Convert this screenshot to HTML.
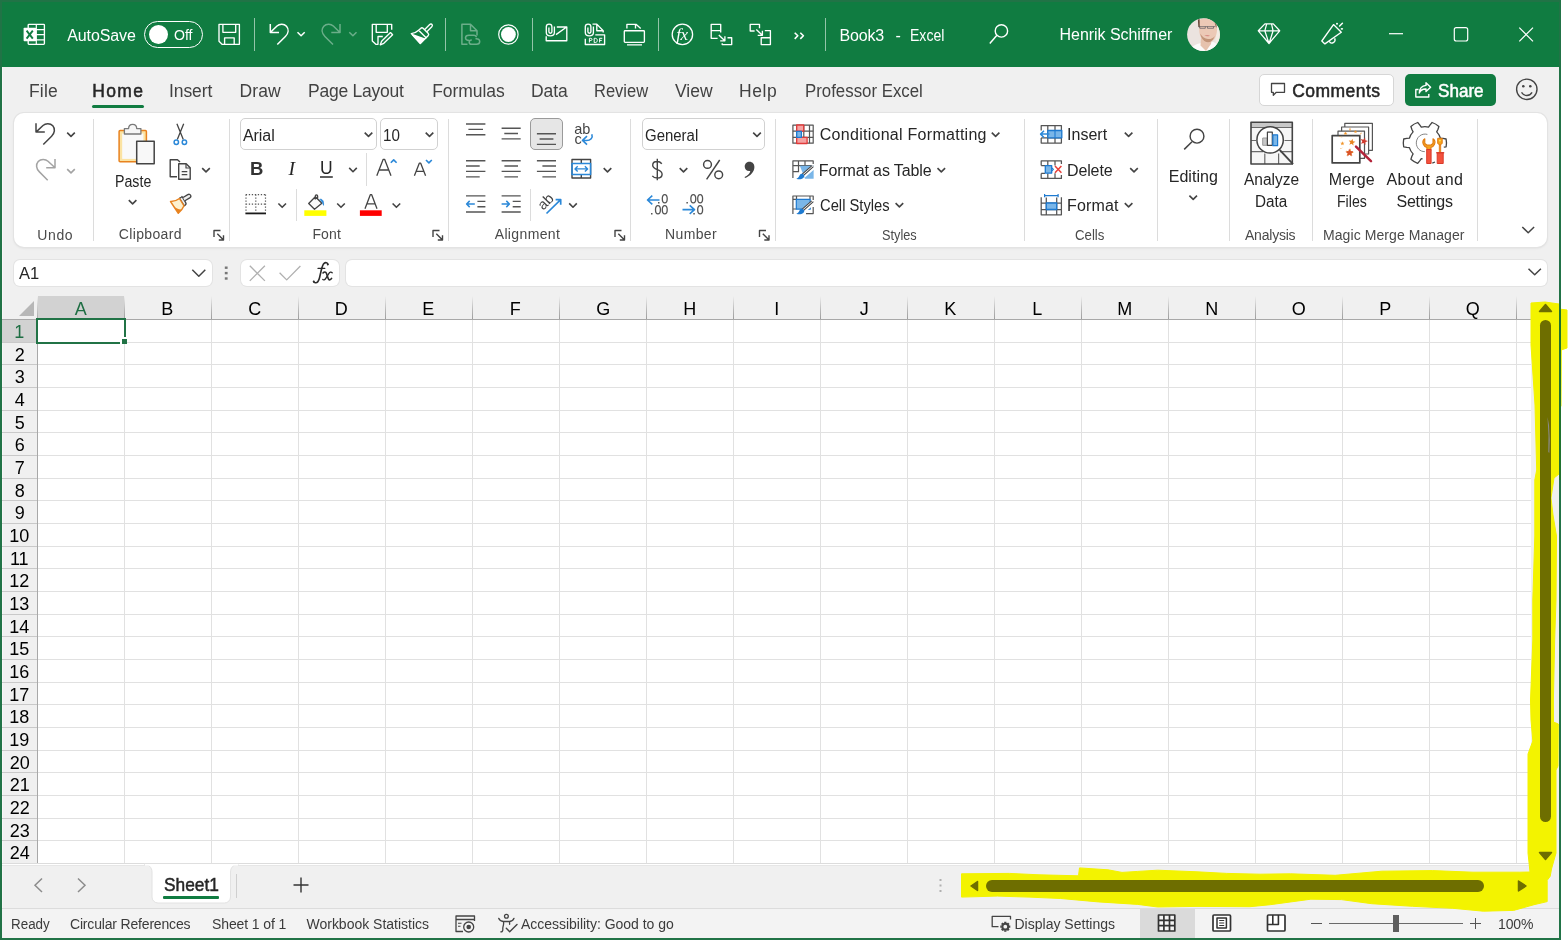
<!DOCTYPE html>
<html lang="en">
<head>
<meta charset="utf-8">
<title>Book3 - Excel</title>
<style>
*{box-sizing:border-box;margin:0;padding:0}
html,body{width:1568px;height:940px;overflow:hidden;background:#fff}
body{position:relative;font-family:"Liberation Sans",sans-serif;color:#242424}
.a{position:absolute}
.t{position:absolute;white-space:nowrap;line-height:1}
svg{position:absolute;overflow:visible}
#win{left:0;top:0;width:1561px;height:940px;background:#f0f0f0}
#title{left:0;top:0;width:1561px;height:67px;background:#107c41}
.bd{background:#217346}
.ts{background:rgba(255,255,255,.55);width:1px;top:18px;height:33px}
#ribbon{left:14px;top:113px;width:1533px;height:134px;background:#fff;border-radius:10px;box-shadow:0 0 0 1px #e3e3e3,0 1px 3px rgba(0,0,0,.10)}
.gs{background:#dcdcdc;width:1px;top:119px;height:122px}
.ms{background:#dcdcdc;width:1px}
.box{background:#fff;border:1px solid #d1d1d1;border-radius:5px}
.fb{background:#fff;border-radius:6px;box-shadow:0 0 0 1px #e3e3e3}
#grid{left:37px;top:320px;width:1494px;height:543px;background:#fff}
.ch{top:296px;height:23px}
.cl{top:296px;width:1px;height:23px;background:linear-gradient(#f0f0f0,#b9b9b9 60%,#9e9e9e)}
.rl{left:2px;width:35px;height:1px;background:#c9c9c9}
</style>
</head>
<body>
<div id="root" class="a" style="left:0;top:0;width:1568px;height:940px;will-change:transform">
<div id="win" class="a"></div>
<div id="title" class="a"></div>
<!-- window border -->
<div class="a bd" style="left:0;top:0;width:2px;height:940px"></div>
<div class="a bd" style="left:1559px;top:0;width:2px;height:940px"></div>
<div class="a bd" style="left:0;top:0;width:1561px;height:2px"></div>
<div class="a bd" style="left:0;top:938px;width:1561px;height:2px"></div>
<div class="a" style="left:2px;top:67px;width:1px;height:871px;background:#f8f6f6"></div>
<!-- title separators -->
<div class="a ts" style="left:254px"></div>
<div class="a ts" style="left:445px"></div>
<div class="a ts" style="left:532px"></div>
<div class="a ts" style="left:658px"></div>
<div class="a ts" style="left:825px"></div>
<!-- autosave toggle -->
<div class="a" style="left:144px;top:21px;width:59px;height:27px;border:1.3px solid #fff;border-radius:14px"></div>
<div class="a" style="left:149px;top:25px;width:19px;height:19px;border-radius:50%;background:#fff"></div>
<!-- tab underline -->
<div class="a" style="left:92px;top:105px;width:52px;height:3px;border-radius:2px;background:#107c41"></div>
<!-- comments / share -->
<div class="a" style="left:1259px;top:74px;width:135px;height:32px;background:#fff;border:1px solid #d6d6d6;border-radius:5px"></div>
<div class="a" style="left:1405px;top:74px;width:91px;height:32px;background:#107c41;border-radius:5px"></div>
<!-- ribbon -->
<div id="ribbon" class="a"></div>
<div class="a gs" style="left:93px"></div>
<div class="a gs" style="left:229px"></div>
<div class="a gs" style="left:448px"></div>
<div class="a gs" style="left:630px"></div>
<div class="a gs" style="left:775px"></div>
<div class="a gs" style="left:1024px"></div>
<div class="a gs" style="left:1157px"></div>
<div class="a gs" style="left:1229px"></div>
<div class="a gs" style="left:1312px"></div>
<div class="a gs" style="left:1477px"></div>
<div class="a ms" style="left:366px;top:153px;height:33px"></div>
<div class="a ms" style="left:296px;top:189px;height:32px"></div>
<div class="a ms" style="left:530px;top:189px;height:32px"></div>
<!-- combos -->
<div class="a box" style="left:240px;top:118px;width:137px;height:32px"></div>
<div class="a box" style="left:380px;top:118px;width:58px;height:32px"></div>
<div class="a box" style="left:642px;top:118px;width:123px;height:32px"></div>
<div class="a" style="left:530px;top:118px;width:33px;height:32px;background:#e6e6e6;border:1px solid #9a9a9a;border-radius:5px"></div>
<!-- formula bar -->
<div class="a fb" style="left:14px;top:260px;width:198px;height:26px"></div>
<div class="a fb" style="left:241px;top:260px;width:98px;height:26px"></div>
<div class="a fb" style="left:346px;top:260px;width:1201px;height:26px"></div>

<div id="grid" class="a"></div>
<div class="a" style="left:38px;top:296px;width:86px;height:22px;background:#d2d2d2"></div>
<div class="a" style="left:2px;top:320px;width:34px;height:22px;background:#d2d2d2"></div>
<svg style="left:19px;top:301px" width="15" height="15"><path d="M15 0V15H0Z" fill="#b7b7b7"/></svg>
<div class="a" style="left:37px;top:342px;width:1494px;height:1px;background:#e1e1e1"></div>
<div class="a rl" style="top:342px"></div>
<div class="a" style="left:37px;top:364px;width:1494px;height:1px;background:#e1e1e1"></div>
<div class="a rl" style="top:364px"></div>
<div class="a" style="left:37px;top:387px;width:1494px;height:1px;background:#e1e1e1"></div>
<div class="a rl" style="top:387px"></div>
<div class="a" style="left:37px;top:410px;width:1494px;height:1px;background:#e1e1e1"></div>
<div class="a rl" style="top:410px"></div>
<div class="a" style="left:37px;top:432px;width:1494px;height:1px;background:#e1e1e1"></div>
<div class="a rl" style="top:432px"></div>
<div class="a" style="left:37px;top:455px;width:1494px;height:1px;background:#e1e1e1"></div>
<div class="a rl" style="top:455px"></div>
<div class="a" style="left:37px;top:478px;width:1494px;height:1px;background:#e1e1e1"></div>
<div class="a rl" style="top:478px"></div>
<div class="a" style="left:37px;top:500px;width:1494px;height:1px;background:#e1e1e1"></div>
<div class="a rl" style="top:500px"></div>
<div class="a" style="left:37px;top:523px;width:1494px;height:1px;background:#e1e1e1"></div>
<div class="a rl" style="top:523px"></div>
<div class="a" style="left:37px;top:546px;width:1494px;height:1px;background:#e1e1e1"></div>
<div class="a rl" style="top:546px"></div>
<div class="a" style="left:37px;top:568px;width:1494px;height:1px;background:#e1e1e1"></div>
<div class="a rl" style="top:568px"></div>
<div class="a" style="left:37px;top:591px;width:1494px;height:1px;background:#e1e1e1"></div>
<div class="a rl" style="top:591px"></div>
<div class="a" style="left:37px;top:614px;width:1494px;height:1px;background:#e1e1e1"></div>
<div class="a rl" style="top:614px"></div>
<div class="a" style="left:37px;top:636px;width:1494px;height:1px;background:#e1e1e1"></div>
<div class="a rl" style="top:636px"></div>
<div class="a" style="left:37px;top:659px;width:1494px;height:1px;background:#e1e1e1"></div>
<div class="a rl" style="top:659px"></div>
<div class="a" style="left:37px;top:682px;width:1494px;height:1px;background:#e1e1e1"></div>
<div class="a rl" style="top:682px"></div>
<div class="a" style="left:37px;top:704px;width:1494px;height:1px;background:#e1e1e1"></div>
<div class="a rl" style="top:704px"></div>
<div class="a" style="left:37px;top:727px;width:1494px;height:1px;background:#e1e1e1"></div>
<div class="a rl" style="top:727px"></div>
<div class="a" style="left:37px;top:750px;width:1494px;height:1px;background:#e1e1e1"></div>
<div class="a rl" style="top:750px"></div>
<div class="a" style="left:37px;top:772px;width:1494px;height:1px;background:#e1e1e1"></div>
<div class="a rl" style="top:772px"></div>
<div class="a" style="left:37px;top:795px;width:1494px;height:1px;background:#e1e1e1"></div>
<div class="a rl" style="top:795px"></div>
<div class="a" style="left:37px;top:818px;width:1494px;height:1px;background:#e1e1e1"></div>
<div class="a rl" style="top:818px"></div>
<div class="a" style="left:37px;top:840px;width:1494px;height:1px;background:#e1e1e1"></div>
<div class="a rl" style="top:840px"></div>
<div class="a" style="left:37px;top:863px;width:1494px;height:1px;background:#e1e1e1"></div>
<div class="a rl" style="top:863px"></div>
<div class="a" style="left:124px;top:320px;width:1px;height:543px;background:#e1e1e1"></div>
<div class="a cl" style="left:124px"></div>
<div class="a" style="left:211px;top:320px;width:1px;height:543px;background:#e1e1e1"></div>
<div class="a cl" style="left:211px"></div>
<div class="a" style="left:298px;top:320px;width:1px;height:543px;background:#e1e1e1"></div>
<div class="a cl" style="left:298px"></div>
<div class="a" style="left:385px;top:320px;width:1px;height:543px;background:#e1e1e1"></div>
<div class="a cl" style="left:385px"></div>
<div class="a" style="left:472px;top:320px;width:1px;height:543px;background:#e1e1e1"></div>
<div class="a cl" style="left:472px"></div>
<div class="a" style="left:559px;top:320px;width:1px;height:543px;background:#e1e1e1"></div>
<div class="a cl" style="left:559px"></div>
<div class="a" style="left:646px;top:320px;width:1px;height:543px;background:#e1e1e1"></div>
<div class="a cl" style="left:646px"></div>
<div class="a" style="left:733px;top:320px;width:1px;height:543px;background:#e1e1e1"></div>
<div class="a cl" style="left:733px"></div>
<div class="a" style="left:820px;top:320px;width:1px;height:543px;background:#e1e1e1"></div>
<div class="a cl" style="left:820px"></div>
<div class="a" style="left:907px;top:320px;width:1px;height:543px;background:#e1e1e1"></div>
<div class="a cl" style="left:907px"></div>
<div class="a" style="left:994px;top:320px;width:1px;height:543px;background:#e1e1e1"></div>
<div class="a cl" style="left:994px"></div>
<div class="a" style="left:1081px;top:320px;width:1px;height:543px;background:#e1e1e1"></div>
<div class="a cl" style="left:1081px"></div>
<div class="a" style="left:1168px;top:320px;width:1px;height:543px;background:#e1e1e1"></div>
<div class="a cl" style="left:1168px"></div>
<div class="a" style="left:1255px;top:320px;width:1px;height:543px;background:#e1e1e1"></div>
<div class="a cl" style="left:1255px"></div>
<div class="a" style="left:1342px;top:320px;width:1px;height:543px;background:#e1e1e1"></div>
<div class="a cl" style="left:1342px"></div>
<div class="a" style="left:1429px;top:320px;width:1px;height:543px;background:#e1e1e1"></div>
<div class="a cl" style="left:1429px"></div>
<div class="a" style="left:1516px;top:320px;width:1px;height:543px;background:#e1e1e1"></div>
<div class="a cl" style="left:1516px"></div>
<div class="a" style="left:2px;top:319px;width:1529px;height:1px;background:#a8a8a8"></div>
<div class="a" style="left:37px;top:296px;width:1px;height:567px;background:linear-gradient(#f0f0f0,#a8a8a8 23px)"></div>
<div class="a" style="left:36px;top:318px;width:90px;height:26px;border:2px solid #217346"></div>
<div class="a" style="left:120px;top:337px;width:5px;height:5px;background:#217346;border-left:2px solid #fff;border-top:2px solid #fff;box-sizing:content-box"></div>
<!-- title bar icons (absolute page coords) -->
<svg style="left:0;top:0" width="1568" height="67" fill="none" stroke="#fff" stroke-width="1.35" stroke-linejoin="round">
<!-- excel logo -->
<g>
<rect x="28.2" y="24.3" width="16.2" height="20.1" rx="0.8"/>
<path d="M36.300 24.300V44.400M36.300 29.600H44.400M36.300 34.700H44.400M36.300 39.800H44.400M28.200 29.600H36M28.200 39.800H36" stroke-width="1.2"/>
<rect x="23.6" y="27.8" width="12.5" height="13.5" rx="0.8" fill="#fff" stroke="none"/>
<path d="M26.600 30.600L32.800 38.600M32.800 30.600L26.600 38.600" stroke="#107c41" stroke-width="1.9"/>
</g>
<!-- save -->
<path d="M219 24.300H239.400V44.300H222L219 41.300Z"/>
<path d="M222.900 24.300V32.300H235.700V24.300M224.600 44.300V37.800H234.200V44.300"/>
<!-- undo -->
<path d="M270.300 24V32.500H279M270.800 32L277 26C279.500 23.600 284 23.500 286.500 26.300C289 29.200 288.600 33.300 285.400 36.500L277.300 44.500" stroke-width="1.5"/>
<path d="M297.500 32.300L301.100 35.800L304.700 32.300" stroke-width="1.5"/>
<!-- redo (disabled) -->
<g opacity=".38">
<path d="M340 24V32.500H331.300M339.500 32L333.300 26C330.800 23.600 326.300 23.500 323.800 26.300C321.300 29.200 321.700 33.300 324.900 36.500L333 44.500" stroke-width="1.5"/>
<path d="M349.300 32.300L352.900 35.800L356.500 32.300" stroke-width="1.5"/>
</g>
<!-- save as (floppy + pencil) -->
<path d="M391.700 29.800V24.300H372.300V41L375.800 44.300H378V36.500H382.800"/>
<path d="M376.200 24.300V32.300H387.300V24.300"/>
<path d="M390.500 32.600L392.600 34.700L383.800 43.300L380.300 44.800L381.600 41.300Z"/>
<!-- brush (clear formatting) -->
<path d="M424.500 29.700L429.700 24.500C430.600 23.700 431.600 24 432 24.500C432.500 25.100 432.500 26 431.800 26.700L426.600 31.900"/>
<path d="M420.600 28.400C421.400 27.600 422.400 27.600 423.100 28.300L428.100 33.300C428.800 34 428.800 35 428.100 35.700L426.100 37.700L418.600 30.300Z"/>
<path d="M418.600 30.300C416.500 32.300 414 33.400 411.300 33.600L420.300 43.500L426.100 37.700" />
<path d="M412.500 34.700L424.400 38.800L420.300 43.200Z" fill="#fff"/>
<!-- doc link (disabled) -->
<g opacity=".38" stroke-width="1.5">
<path d="M467.500 44.300H461.900V24.300H470.500L477 30.800V35.500M470.500 24.300V30.800H477"/>
<path d="M469.300 40.500C466.800 40.500 465.500 39.200 465.500 37.800C465.500 36.300 466.800 35.200 469 35.200H473.500C475.500 35.200 476.300 36.500 476.300 37.300M475.500 38.800C478.500 38.500 479.700 39.900 479.700 41.500C479.700 43.200 478.400 44.300 476.500 44.300H472C470 44.300 469.200 43.200 469.200 42.200C469.200 40.800 470.500 40 471.800 40"/>
</g>
<!-- record circle -->
<circle cx="508.400" cy="34.500" r="9.700" stroke-width="1.2"/>
<circle cx="508.400" cy="34.500" r="7.400" fill="#fff" stroke="none"/>
<!-- mail with clip -->
<path d="M556.800 27H566.800V40.700H546.200V36.300M556 34.600L566.300 27.300"/>
<path d="M554.400 26.500V32.500C554.400 34.500 552.600 35.800 550.300 35.800C548 35.800 546.300 34.500 546.300 32.500V26.800C546.300 25 547.600 24.100 549.100 24.100C550.600 24.100 551.900 25 551.900 26.800V31.800C551.900 32.700 551.200 33.200 550.400 33.200C549.600 33.200 548.900 32.700 548.900 31.800V27.500"/>
<!-- pdf with clip -->
<path d="M592.500 24.100H596.800L603.200 30.700V32.500M596.800 24.400V30.700H603"/>
<path d="M593.400 26.500V32.500C593.400 34.500 591.600 35.800 589.300 35.800C587 35.800 585.300 34.500 585.300 32.500V26.800C585.300 25 586.600 24.100 588.100 24.100C589.600 24.100 590.900 25 590.900 26.800V31.800C590.900 32.700 590.200 33.200 589.400 33.200C588.600 33.200 587.900 32.700 587.900 31.800V27.500"/>
<path d="M595.300 34.800H604.600V44.500H585.300V38.700"/>
<path d="M589.400 42.500V38.300H590.800C592.400 38.300 592.400 40.500 590.800 40.500H589.400M594.200 42.500V38.300H595.300C598 38.300 598 42.500 595.300 42.500ZM599.600 42.500V38.300H602.300M599.600 40.400H601.800" stroke-width="1"/>
<!-- quick print -->
<rect x="624.300" y="30.700" width="20.100" height="11.600" rx="0.8"/>
<path d="M626.900 28.500V24.300H636L640.700 28.500M635.500 24.500V28.500M627 44.800H642" />
<!-- fx circle -->
<circle cx="682.400" cy="34.400" r="10.200" stroke-width="1.3"/>
<!-- move arrows 1 -->
<path d="M717.600 38.300H711.200V24.300H720.700V32.400M711.200 30.600H720.700M718.800 34.900L724.800 40.700M724.900 36.200V40.800H720.200M727.500 37.700H731.700V44.600H722.200V43.200"/>
<!-- move arrows 2 -->
<path d="M754.600 31H750.200V24.300H759.500V28.300M756.300 29.400L762.300 35.200M762.400 30.700V35.300H757.700M764.800 30.600H770.400V44.600H761.200V37.700H770.400"/>
<!-- overflow >> -->
<path d="M794.700 32.700L797.800 35.800L794.700 38.900M800.300 32.700L803.400 35.800L800.300 38.900" stroke-width="1.6"/>
<!-- search -->
<circle cx="1001.400" cy="30.900" r="6.200" stroke-width="1.4"/>
<path d="M996.900 35.300L989.800 43.500" stroke-width="1.5"/>
<!-- diamond -->
<path d="M1264.900 23.900H1273.300L1279.700 30.800L1269 43.500L1258.300 30.800ZM1258.300 30.800H1279.700M1266.700 23.900L1264.800 30.800L1269 43.500L1273.100 30.800L1271.500 23.900" stroke-width="1.250"/>
<!-- megaphone -->
<path d="M1333.500 24.600L1341.300 32.200L1324.900 43.900L1321.800 41Z"/>
<path d="M1329.200 41.300C1330 42.800 1331.800 43.400 1333.300 42.600C1334.800 41.800 1335.400 40 1334.700 38.200"/>
<path d="M1339.600 26L1342.400 23.300" stroke-width="1.500" stroke-linecap="round"/>
<circle cx="1337" cy="23.800" r="1" fill="#fff" stroke="none"/><ellipse cx="1341.900" cy="28.800" rx="1.300" ry="0.900" fill="#fff" stroke="none"/>
<!-- window controls -->
<path d="M1389 33.700H1403" stroke-width="1.2"/>
<rect x="1454.300" y="27.600" width="13.400" height="13.400" rx="2" stroke-width="1.2"/>
<path d="M1519.300 27.600L1533 41.300M1533 27.600L1519.300 41.300" stroke-width="1.2"/>
</svg>
<div class="t" style="left:676.300px;top:25.500px;font-size:17px;font-style:italic;font-family:'Liberation Serif',serif;color:#fff;letter-spacing:-.5px">fx</div>
<!-- avatar -->
<svg style="left:1187px;top:18px" width="33" height="33" viewBox="0 0 33 33">
<defs><clipPath id="av"><circle cx="16.500" cy="16.600" r="16.400"/></clipPath>
<filter id="avb" x="-20%" y="-20%" width="140%" height="140%"><feGaussianBlur stdDeviation="0.700"/></filter></defs>
<g clip-path="url(#av)">
<rect width="33" height="33" fill="#ebe3df"/>
<g filter="url(#avb)">
<rect x="28.500" y="8" width="6" height="26" fill="#f3ece4"/>
<path d="M2 34C4 28 9 26 14 25L26 24C30 25 32 29 33 34Z" fill="#fbfaf9"/>
<path d="M14 20L13.500 27.500L19 33L24 26L25 19Z" fill="#e6c2ad"/>
<path d="M11.800 3C14 -1 26 -1 29 5C31 10 30 16 28 20C26 23.500 22 25.500 19 24.500C15.500 23.500 13 19 12.300 14Z" fill="#ecc9b6"/>
<path d="M10.900 1.500L12.600 1L12.800 9.500L11.300 9Z" fill="#6a4a3c"/>
<path d="M27.500 3.500C29.500 5 30 8 29.300 10L28.300 7Z" fill="#8a6450"/>
<path d="M13.300 15.500C14 20 16.500 23.500 20 24.300C23.500 24.800 26.500 22 27.800 18C26 20.500 23.500 21.300 21 21C18 20.800 15 19 13.300 15.500Z" fill="#c29478"/>
<path d="M17.300 17.600C19 16.900 21.500 16.900 23 17.700C21.500 18.600 19 18.600 17.300 17.600Z" fill="#d78d84"/>
<path d="M12 8.600H28.300M12.800 8.600V10.300H18.300V8.600M20.500 8.600V10.300H26.500V8.600" stroke="#55525a" stroke-width="0.650" fill="none"/>
</g>
</g>
</svg>

<!-- ribbon icons A: undo, clipboard, font (absolute page coords) -->
<svg style="left:0;top:0" width="1568" height="300" fill="none" stroke="#444" stroke-width="1.4" stroke-linejoin="round">
<defs>
<path id="chv" d="M-3.800 -1.900L0 1.900L3.800 -1.900" stroke-width="1.6" fill="none"/>
</defs>
<!-- undo -->
<path transform="translate(0 0.800)" d="M36 122.500V131.300H44.800M36.500 130.800L43 124.700C45.500 122.300 50.200 122.200 52.800 125C55.300 127.900 54.900 132.200 51.600 135.400L43.300 143.700" stroke-width="1.5"/>
<use href="#chv" x="71" y="134.500"/>
<!-- redo disabled -->
<g stroke="#a3a3a3">
<path d="M55 159V167.800H46.200M54.500 167.300L48 161.200C45.500 158.800 40.800 158.700 38.200 161.500C35.700 164.400 36.100 168.700 39.400 171.900L47.700 180.200" stroke-width="1.5"/>
<use href="#chv" x="71" y="171"/>
</g>
<!-- paste -->
<rect x="119.100" y="130.500" width="27.300" height="31.200" rx="1" fill="#fbe3a2" stroke="#e8821e" stroke-width="1.500"/>
<rect x="122.200" y="133.500" width="21.200" height="25.400" fill="#f9f9f9" stroke="none"/>
<path d="M124.400 134H140.900V128.600H136.700C136.700 126.200 135 124.400 132.650 124.400C130.300 124.400 128.600 126.200 128.600 128.600H124.400Z" fill="#f6f6f6" stroke="#7a7a7a" stroke-width="1.300"/>
<rect x="136.700" y="141.300" width="17.500" height="22.500" fill="#f8f8f8" stroke="#444" stroke-width="1.500"/>
<use href="#chv" x="132.600" y="202"/>
<!-- cut -->
<path d="M176.900 123.700L183.300 139.600M183.700 123.700L177.300 139.600" stroke-width="1.300"/>
<circle cx="176.300" cy="142.300" r="2.200" stroke="#2b88d8" stroke-width="1.500"/>
<circle cx="184.400" cy="142.300" r="2.200" stroke="#2b88d8" stroke-width="1.500"/>
<!-- copy -->
<path d="M177 176.800H170.200V159.700H177.500L180 162" fill="none"/>
<path d="M178.700 163.700H186.200L190.200 167.700V179.200H178.700Z" fill="#f8f8f8"/>
<path d="M186 164V168H190M181.700 171.600H187.300M181.700 174.600H187.300" stroke-width="1.200"/>
<use href="#chv" x="206" y="170"/>
<!-- format painter -->
<path d="M182 196.500L185.700 202.600C186.500 203.900 185.800 204.800 184.900 205.400L184.200 205.800L179.500 198.300L180.200 197.800C180.800 197.400 181.500 197.400 182 196.500Z" fill="#f0f0f0" stroke-width="1.300"/>
<path d="M183 197.500L187.800 194.600C189 193.900 190.100 194.300 190.600 195.200C191.100 196.100 190.800 197.200 189.700 197.900L184.900 200.800" stroke-width="1.300" fill="#f0f0f0"/>
<path d="M179.500 198.500C176.500 200.800 173.500 201.600 170.500 201.500L178.300 213.300C180.800 211 183 208.500 184 205.800Z" fill="#fdf1cf" stroke="#e8821e" stroke-width="1.400"/>
<path d="M173.500 206L178.300 213L181.500 209.500C179 209.800 176 208.500 173.500 206Z" fill="#e8821e" stroke="none"/>
<!-- combobox chevrons -->
<use href="#chv" x="368.500" y="134.500"/>
<use href="#chv" x="429.500" y="134.500"/>
<!-- underline bar + chevron -->
<path d="M320 177H332.800" stroke-width="1.700"/>
<use href="#chv" x="353" y="169.800"/>
<!-- grow / shrink font -->
<path d="M376.800 175.800L383.200 159.300H384.600L391 175.800M379.300 170H388.500" stroke-width="1.300"/>
<path d="M390.800 162.800L393.700 159.900L396.600 162.800" stroke="#2b88d8" stroke-width="1.600"/>
<path d="M414.400 175.800L419.300 163.200H420.700L425.600 175.800M416.400 171.300H423.600" stroke-width="1.300"/>
<path d="M426 160L428.900 162.900L431.800 160" stroke="#2b88d8" stroke-width="1.600"/>
<!-- borders -->
<g stroke="#555" stroke-width="1.200" stroke-dasharray="1.300 1.700">
<path d="M245.800 194.700H265.800M245.800 204.200H265.800M246 194.500V212M255.800 194.500V212M265.500 194.500V212"/>
</g>
<path d="M245.400 213.400H266" stroke="#1a1a1a" stroke-width="1.800"/>
<use href="#chv" x="282.200" y="205.400"/>
<!-- fill colour -->
<path d="M315.300 196.700L321.900 203.300L314.500 209.300L308.700 203.500ZM315.300 199.500V196C315.300 194.600 317.600 194.600 317.600 196V199" stroke-width="1.300" fill="#fafafa"/>
<path d="M319.800 199.300C322 198.800 324 200.500 323.500 205.300C323 203 321.800 201.300 319.800 199.300Z" fill="#2b88d8" stroke="#2b88d8" stroke-width="0.800"/>
<rect x="304.300" y="210.300" width="22.100" height="5.600" fill="#ffff00" stroke="none"/>
<use href="#chv" x="341" y="205.400"/>
<!-- font colour -->
<path d="M365 208.700L370.300 194.700H371.700L377 208.700M367.200 203.800H374.800" stroke-width="1.300"/>
<rect x="359.900" y="210.300" width="21.800" height="5.600" fill="#ff0000" stroke="none"/>
<use href="#chv" x="396.400" y="205.400"/>
<!-- dialog launchers -->
<g stroke="#444" stroke-width="1.400">
<path id="dl" d="M0 6.500V0H6.500M3.300 3.300L9.300 9.300M9.500 4.800V9.500H4.800" transform="translate(214 230.500)"/>
<use href="#dl" x="219" y="0"/>
<use href="#dl" x="401" y="0"/>
<use href="#dl" x="545.500" y="0"/>
</g>
</svg>

<!-- ribbon icons B: alignment, number (absolute page coords) -->
<svg style="left:0;top:0" width="1568" height="300" fill="none" stroke="#555" stroke-width="1.35" stroke-linejoin="round">
<!-- top / middle / bottom align -->
<path d="M466 124H485.400M468.400 129.400H483M466 134.700H485.400"/>
<path d="M501.600 128.200H520.700M504.300 133.500H518M501.600 138.800H520.700"/>
<path d="M536.900 133.700H556M539.600 139H553.400M536.900 144.300H556"/>
<!-- wrap text arrow -->
<path d="M591.800 134.200C593.200 137.800 590.500 140.500 586.500 140.500H582.800M587 136.200L582.500 140.400L587 144.600" stroke="#2b88d8" stroke-width="1.600"/>
<!-- left / center / right -->
<path d="M466 160.700H485.400M466 166H479.700M466 171.400H485.400M466 176.800H479.700"/>
<path d="M501.600 160.700H520.700M504.400 166H518M501.600 171.400H520.700M504.400 176.800H518"/>
<path d="M536.900 160.700H556M542.400 166H556M536.900 171.400H556M542.400 176.800H556"/>
<!-- merge & center -->
<path d="M572 159.500H590.600V178H572ZM581.300 159.500V163.500M581.300 174.500V178" stroke="#444" stroke-width="1.400"/>
<rect x="572" y="163.400" width="18.600" height="11" stroke="#2b88d8" stroke-width="1.500"/>
<path d="M575 168.900H587.600M577.700 166.200L575 168.900L577.700 171.600M584.900 166.200L587.600 168.900L584.900 171.600" stroke="#2b88d8" stroke-width="1.400"/>
<use href="#chv" x="607.500" y="170" stroke="#444"/>
<!-- decrease indent -->
<path d="M466 195.900H485.400M477.400 201.300H485.400M477.400 206.700H485.400M466 212H485.400"/>
<path d="M466.600 204H474.800M469.700 200.900L466.600 204L469.700 207.100" stroke="#2b88d8" stroke-width="1.500"/>
<!-- increase indent -->
<path d="M501.600 195.900H520.700M512.700 201.300H520.700M512.700 206.700H520.700M501.600 212H520.700"/>
<path d="M501.600 204H509.400M506.300 200.900L509.400 204L506.300 207.100" stroke="#2b88d8" stroke-width="1.500"/>
<!-- orientation arrow -->
<path d="M546.500 213.500L560.400 199.900M555.600 199.600H560.700V204.700" stroke="#2b88d8" stroke-width="1.700"/>
<use href="#chv" x="573" y="205.300" stroke="#444"/>
<!-- number format combo chevron -->
<use href="#chv" x="757" y="134.500" stroke="#444"/>
<use href="#chv" x="683.500" y="170" stroke="#444"/>
<!-- percent -->
<g stroke="#444" stroke-width="1.450">
<circle cx="707.500" cy="164.400" r="3.900"/>
<circle cx="718.700" cy="174.800" r="3.900"/>
<path d="M719.700 160L706.600 179.400"/>
</g>
<!-- comma -->
<path d="M749.600 161.700C752.300 161.700 754.400 163.800 754.400 167C754.400 171.800 750.500 176 745 178L744.600 177C748 175.300 750 173.200 750.300 171C747 171.600 744.700 169.500 744.700 166.600C744.700 163.700 746.900 161.700 749.600 161.700Z" fill="#444" stroke="none"/>
<!-- decimal arrows -->
<path d="M647.500 200H659.500M652.300 195.700L647.500 200L652.300 204.300" stroke="#2b88d8" stroke-width="1.600"/>
<path d="M682.500 209.600H694.500M689.700 205.300L694.500 209.600L689.700 213.900" stroke="#2b88d8" stroke-width="1.600"/>
<g stroke="#555" stroke-width="1.300">
<ellipse cx="664.750" cy="198.800" rx="2.450" ry="4.150"/>
<ellipse cx="657.950" cy="209.800" rx="2.450" ry="4.150"/>
<ellipse cx="664.750" cy="209.800" rx="2.450" ry="4.150"/>
<ellipse cx="693.300" cy="198.800" rx="2.450" ry="4.150"/>
<ellipse cx="700.150" cy="198.800" rx="2.450" ry="4.150"/>
<ellipse cx="700.150" cy="209.800" rx="2.450" ry="4.150"/>
</g>
<g fill="#555" stroke="none">
<rect x="658" y="202" width="1.500" height="1.500"/><rect x="651" y="213" width="1.500" height="1.500"/>
<rect x="686.400" y="202" width="1.500" height="1.500"/><rect x="693.300" y="213" width="1.500" height="1.500"/>
</g>
</svg>
<div class="t" style="left:545px;top:197.500px;font-size:14.500px;color:#444;transform:rotate(-45deg);transform-origin:0 100%">ab</div>

<!-- ribbon icons C: styles, cells, editing, analysis, magic merge (absolute page coords) -->
<svg style="left:0;top:0" width="1568" height="300" fill="none" stroke="#444" stroke-width="1.35" stroke-linejoin="round">
<!-- dollar -->
<path d="M657.300 158.800V180.300M661.800 163.700C660.600 162.200 659 161.500 657 161.500C654.300 161.500 652.700 163 652.700 165.200C652.700 170.500 662.100 168.800 662.100 174.200C662.100 176.600 660 178 657.200 178C655 178 653.300 177.200 652.300 175.800" stroke-width="1.400"/>
<!-- conditional formatting -->
<g stroke="#555" stroke-width="1.200">
<rect x="792.900" y="125.200" width="20.300" height="18"/>
<path d="M796.600 125.200V143.200M803.800 125.200V143.200M809.500 125.200V143.200M792.900 131.200H813.200M792.900 137.300H813.200"/>
</g>
<rect x="796.700" y="125" width="7" height="6.200" fill="#f4a3a3" stroke="#e03b3b" stroke-width="1.300"/>
<rect x="796.700" y="137.300" width="10.400" height="6.200" fill="#f4a3a3" stroke="#e03b3b" stroke-width="1.300"/>
<rect x="796.700" y="131.300" width="4.700" height="6" fill="#7ab6e8" stroke="#1e7ad0" stroke-width="1.300"/>
<use href="#chv" x="995.600" y="134.500"/>
<!-- format as table -->
<g stroke="#555" stroke-width="1.200">
<path d="M792.900 178V160.900H813.200V164M792.900 165.600H813.200M798.500 160.900V172M805 160.900V166M792.900 171.600H799"/>
</g>
<path d="M799.800 165.800H813.600V178.700H805Z" fill="#7ab6e8" stroke="none"/>
<path d="M813.800 166.800L803.500 175.700" stroke="#fff" stroke-width="4.500"/>
<path d="M813.400 166.600L803.600 175.300M811.700 165.800L802.200 174.200" stroke="#444" stroke-width="1.100"/>
<path d="M802.300 173.700C804.500 174.500 805 176.300 803.300 177.900C801.500 179.500 798.600 179.600 796.300 178.700C798.800 177.800 799 176.200 799.800 174.900C800.400 173.900 801.300 173.500 802.300 173.700Z" fill="#1e7ad0" stroke="none"/>
<use href="#chv" x="941.300" y="170"/>
<!-- cell styles -->
<g stroke="#555" stroke-width="1.200">
<path d="M792.900 214V196H813.200V200M806 213.600H813.200V207M792.900 199.400H796.500M792.900 209H796.500M796.500 196V199.300M810 196V199.300"/>
</g>
<path d="M796.300 199.400H810.200V209.200H796.300Z" fill="#7ab6e8" stroke="#1e7ad0" stroke-width="1.200"/>
<path d="M813.800 201.800L803.500 210.700" stroke="#fff" stroke-width="4.500"/>
<path d="M813.400 201.600L803.600 210.300M811.700 200.800L802.200 209.200" stroke="#444" stroke-width="1.100"/>
<path d="M802.300 208.700C804.500 209.500 805 211.300 803.300 212.900C801.500 214.500 798.600 214.600 796.300 213.700C798.800 212.800 799 211.200 799.800 209.900C800.400 208.900 801.300 208.500 802.300 208.700Z" fill="#1e7ad0" stroke="none"/>
<use href="#chv" x="899.400" y="205"/>
<!-- insert cells -->
<g stroke="#555" stroke-width="1.250">
<path d="M1047 125.500H1061.400V143H1041.200V138M1041.200 130.500V125.500H1047M1047.800 125.500V143M1055 125.500V143M1041.200 137.800H1061.400M1047.800 130.500H1061.400"/>
</g>
<rect x="1047.800" y="130.500" width="14" height="7.300" fill="#7ab6e8" stroke="#1e7ad0" stroke-width="1.300"/>
<path d="M1055 130.500V137.800" stroke="#1e7ad0" stroke-width="1.100"/>
<path d="M1040.600 134.100H1049.500M1044 130.700L1040.600 134.100L1044 137.500" stroke="#2b88d8" stroke-width="1.500"/>
<use href="#chv" x="1128.600" y="134.500"/>
<!-- delete cells -->
<g stroke="#555" stroke-width="1.250">
<path d="M1041.200 165.500V160.900H1061.400V164M1041.200 173.500V178.400H1061.400V175M1047.800 160.900V165.400M1055 160.900V165.400M1047.800 173.300V178.400M1055 173.300V178.400M1041.200 165.500H1045M1041.200 173.300H1045"/>
</g>
<rect x="1045.300" y="165.600" width="6.400" height="7.500" fill="#7ab6e8" stroke="#1e7ad0" stroke-width="1.300"/>
<path d="M1052 168L1053.400 169.400L1052 170.800" stroke="#1e7ad0" stroke-width="1.100"/>
<path d="M1055 166L1061.400 172.800M1061.400 166L1055 172.800" stroke="#e8403a" stroke-width="1.500"/>
<use href="#chv" x="1134" y="170"/>
<!-- format cells -->
<g stroke="#555" stroke-width="1.250">
<path d="M1041.200 197.300V214.800H1061.400V197.300M1046.300 197.500V214.800M1056.700 197.500V214.800M1041.200 203H1061.400M1041.200 209.500H1061.400"/>
</g>
<rect x="1046.300" y="203" width="10.400" height="6.500" fill="#7ab6e8" stroke="#1e7ad0" stroke-width="1.300"/>
<path d="M1044.500 195.600H1058.200M1044.600 194V197.200M1058.100 194V197.200" stroke="#1e7ad0" stroke-width="1.200"/>
<use href="#chv" x="1128.600" y="205"/>
<!-- editing -->
<circle cx="1197" cy="136.200" r="6.900" stroke-width="1.450"/>
<path d="M1192 141.700L1184.200 149.400" stroke-width="1.500"/>
<use href="#chv" x="1193.200" y="197.500"/>
<!-- analyze data -->
<rect x="1251" y="122.300" width="41.300" height="41.700" fill="#f6f6f6" stroke="none"/>
<rect x="1251" y="122.300" width="41.300" height="5.200" fill="#c8c8c8" stroke="none"/>
<path d="M1251 127.500H1292.300M1251 140.500H1256M1284.500 140.500H1292.300M1251 151.700H1263M1280 151.700H1292.300M1264.800 153.500V164M1278.600 153.500V164" stroke="#6a6a6a" stroke-width="1.200"/>
<rect x="1251" y="122.300" width="41.300" height="41.700" stroke-width="1.600"/>
<circle cx="1270.100" cy="139.900" r="13.200" fill="#fff" stroke-width="1.500"/>
<path d="M1279.700 149.800L1293 164.200" stroke-width="1.900"/>
<rect x="1262.700" y="138" width="4.700" height="7.300" fill="#c8c8c8" stroke="#9a9a9a" stroke-width="1"/>
<rect x="1267.400" y="132.200" width="4.900" height="13.100" fill="#fff" stroke="#444" stroke-width="1.200"/>
<rect x="1272.900" y="134.800" width="4.700" height="10.900" fill="#7ab6e8" stroke="#1e7ad0" stroke-width="1.200"/>
<!-- merge files -->
<g stroke="#555" stroke-width="1.200" fill="#fff">
<rect x="1344.800" y="123.300" width="27.600" height="27"/>
<rect x="1341.600" y="127" width="27" height="27"/>
<rect x="1338" y="131.200" width="26.500" height="27.200"/>
</g>
<rect x="1332.200" y="135.600" width="27.600" height="27.300" fill="#fff" stroke-width="1.700"/>
<g stroke="none">
<path id="st" d="M0 -1L0.250 -0.340L0.950 -0.310L0.400 0.130L0.590 0.810L0 0.420L-0.590 0.810L-0.400 0.130L-0.950 -0.310L-0.250 -0.340Z" transform="translate(1351.900 142.200) scale(3.600) rotate(10)" fill="#e8821e"/>
<use href="#st" transform="translate(1349.600 152.800) scale(1.180) translate(-1351.900 -142.200)" fill="#d44a2a"/>
<path d="M0 -1L0.250 -0.340L0.950 -0.310L0.400 0.130L0.590 0.810L0 0.420L-0.590 0.810L-0.400 0.130L-0.950 -0.310L-0.250 -0.340Z" transform="translate(1349.500 152.800) scale(4.300) rotate(-5)" fill="#d9522b"/>
<path d="M0 -1L0.250 -0.340L0.950 -0.310L0.400 0.130L0.590 0.810L0 0.420L-0.590 0.810L-0.400 0.130L-0.950 -0.310L-0.250 -0.340Z" transform="translate(1364 141.300) scale(4) rotate(15)" fill="#cf3a2e"/>
<path d="M0 -1L0.250 -0.340L0.950 -0.310L0.400 0.130L0.590 0.810L0 0.420L-0.590 0.810L-0.400 0.130L-0.950 -0.310L-0.250 -0.340Z" transform="translate(1342.400 143.500) scale(2.200)" fill="#f0942a"/>
<path d="M0 -1L0.250 -0.340L0.950 -0.310L0.400 0.130L0.590 0.810L0 0.420L-0.590 0.810L-0.400 0.130L-0.950 -0.310L-0.250 -0.340Z" transform="translate(1345.500 133.500) scale(2)" fill="#f0942a"/>
<path d="M0 -1L0.250 -0.340L0.950 -0.310L0.400 0.130L0.590 0.810L0 0.420L-0.590 0.810L-0.400 0.130L-0.950 -0.310L-0.250 -0.340Z" transform="translate(1355.500 131.800) scale(1.900)" fill="#f0942a"/>
<path d="M1349.200 128.500L1350 131.800L1350.800 128.500ZM1339 136L1342.800 137.700L1339.500 136.800ZM1340 148.300L1343.300 147.700L1340.200 148.800ZM1361 132.500L1359.500 135.500L1361.800 133Z" fill="#f0942a"/>
</g>
<path d="M1356 146.600L1371 161.200" stroke="#b3243a" stroke-width="2.500" stroke-linecap="round"/>
<!-- about and settings -->
<path d="M1422.600 158.900L1421.300 158.700L1419.700 160.900L1417.700 163.300C1415.300 162.500 1413 161.200 1410.900 159.300L1411.900 156.300L1413.100 153.900C1411.400 152.200 1410.100 150 1409.400 147.600L1406.800 147.400L1403.700 146.800C1403.200 144.300 1403.200 141.500 1403.700 139L1406.800 138.400L1409.400 138.200C1410.100 135.800 1411.400 133.600 1413.100 131.900L1411.900 129.500L1410.900 126.500C1413 124.600 1415.300 123.300 1417.700 122.500L1419.700 124.900L1421.300 127.100C1423.700 126.500 1426.100 126.500 1428.500 127.100L1430.100 124.900L1432.100 122.500C1434.500 123.300 1436.800 124.600 1438.900 126.500L1437.900 129.500L1436.700 131.900C1438.400 133.600 1439.700 135.800 1440.400 138.200L1443 138.400L1446.100 139C1446.600 141.500 1446.600 144.300 1446.100 146.800L1443.800 147.200M1432.300 163.200L1435 162" stroke-width="1.300"/>
<path d="M1427.400 134.400C1421.500 132.800 1416.300 137.300 1416.300 142.900C1416.300 147.800 1420 151.800 1424.800 151.600" stroke="#777" stroke-width="0.900"/>
<!-- wrench -->
<path d="M1424.800 138.800C1423 140 1422.400 142.400 1423.400 144.600C1424.100 146.100 1425.400 147.200 1426.900 147.500V150H1430.900V147.500C1432.400 147.200 1433.700 146.100 1434.400 144.600C1435.400 142.400 1434.800 140 1433 138.800V143.300L1431 145H1426.800L1424.800 143.300Z" fill="#f6a21e" stroke="#e07a10" stroke-width="1.100"/>
<rect x="1426.700" y="149.500" width="4.400" height="14" fill="#f4513c" stroke="#d93a2a" stroke-width="1"/>
<!-- screwdriver -->
<path d="M1437.700 138.300H1442.200V143.200L1440.800 144.800H1439.100L1437.700 143.200Z" fill="#f6a21e" stroke="#e07a10" stroke-width="1"/>
<rect x="1439.300" y="144.800" width="1.400" height="8" fill="#f08a1d" stroke="#e07a10" stroke-width="0.800"/>
<path d="M1436.200 152.700H1444.200" stroke="#d93a2a" stroke-width="1.300"/>
<rect x="1437.200" y="153" width="6" height="10.500" fill="#f4513c" stroke="#d93a2a" stroke-width="1"/>
<circle cx="1439.900" cy="140.600" r="0.900" fill="#ffe74a" stroke="none"/>
<!-- ribbon collapse + formula bar expand -->
<path d="M1522.300 227L1528.200 232.800L1534.100 227" stroke-width="1.500"/>
<path d="M1528.500 268.800L1534.700 274.800L1540.900 268.800" stroke-width="1.500"/>
</svg>

<!-- sheet tab bar -->
<div class="a" style="left:2px;top:863px;width:1529px;height:1px;background:#dcdcdc"></div>
<div class="a" style="left:2px;top:864px;width:1529px;height:1px;background:#fff"></div>
<div class="a" style="left:2px;top:865px;width:1529px;height:1px;background:#e6e6e6"></div>
<svg style="left:0;top:0" width="400" height="940"><path d="M144 864C148.500 864 152 867.500 152 872V897A6 6 0 0 0 158 903H224.500A6 6 0 0 0 230.500 897V872C230.500 867.500 234 864 238.500 864Z" fill="#fff" stroke="#e2e2e2" stroke-width="1"/><rect x="145" y="864" width="93" height="1.600" fill="#fff"/></svg>
<div class="a" style="left:163px;top:896px;width:56px;height:3px;background:#107c41;border-radius:1px"></div>
<div class="a" style="left:236px;top:874px;width:1px;height:24px;background:#cfcfcf"></div>
<svg style="left:30px;top:875px" width="60" height="20" fill="none" stroke="#8c8c8c" stroke-width="1.5"><path d="M12 3.5L5 10.3L12 17"/><path d="M48 3.5L55 10.3L48 17"/></svg>
<svg style="left:293px;top:877px" width="16" height="16" fill="none" stroke="#333" stroke-width="1.4"><path d="M8 0.5V15.5M0.5 8H15.5"/></svg>
<svg style="left:938px;top:878px" width="5" height="16" fill="#b0b0b0"><rect x="1.5" y="1" width="2" height="2"/><rect x="1.5" y="6.5" width="2" height="2"/><rect x="1.5" y="12" width="2" height="2"/></svg>
<!-- status bar -->
<div class="a" style="left:2px;top:908px;width:1557px;height:30px;background:#f3f3f3;border-top:1px solid #dcdcdc"></div>
<div class="a" style="left:1140px;top:909px;width:55px;height:29px;background:#dadada"></div>
<!-- zoom slider -->
<div class="a" style="left:1311px;top:923px;width:11px;height:1px;background:#555"></div>
<div class="a" style="left:1329px;top:923px;width:134px;height:1px;background:#6a6a6a"></div>
<div class="a" style="left:1393px;top:915px;width:6px;height:17px;background:#5e5e5e"></div>
<div class="a" style="left:1470px;top:923px;width:11px;height:1px;background:#555"></div>
<div class="a" style="left:1475px;top:918px;width:1px;height:11px;background:#555"></div>
<!-- scrollbar tracks -->
<div class="a" style="left:1532px;top:297px;width:27px;height:566px;background:#f0f0f0"></div>
<!-- yellow highlight -->
<svg style="left:0;top:0" width="1568" height="940">
<path fill="#f3f300" stroke="#f3f300" stroke-width="1" stroke-linejoin="round" d="M1531 303 L1531 345 L1533 375 L1535 405 L1536.7 470 L1534.8 480 L1534.8 536 L1532.8 600 L1532.8 640 L1530.5 700 L1531 720 L1532.8 741 L1528 754 L1528 853 L1530 872 L1519.8 872.2 L1473 872.2 L1432.6 870.6 L1381.8 871.2 L1335.2 875.3 L1290.6 873.8 L1260 874.2 L1226.8 873.4 L1197 871.8 L1157.6 870.2 L1137.8 871.4 L1122 872.4 L1108 869.8 L1079.5 867.9 L1078.5 875.8 L1039 874.8 L1009.3 873.4 L961.5 873.8 L961.5 897.1 L997.4 896.1 L1029 897.1 L1060.7 898.5 L1098.3 901.9 L1137.8 904.4 L1157.6 907 L1197 906.4 L1250 906.7 L1270.3 904.7 L1310.9 899.2 L1341.3 899.6 L1371.7 903.7 L1412.3 906.3 L1452.8 908.3 L1483.3 911.2 L1513.7 910.4 L1534 904.7 L1547.2 901.6 L1547.2 880.3 L1550.2 876.3 L1551.5 869 L1556 853 L1556 770 L1558 766 L1558.3 724 L1553.5 722 L1553.4 700 L1554.7 639 L1556 600 L1556.5 536 L1553 515 L1551 498 L1554 478 L1559 474 L1559 409 L1561 406 L1561.3 350 L1567 348 L1567 310 L1559 309 L1559 304 L1545 302 Z"/>
</svg>
<!-- redraw border over highlight -->
<div class="a" style="left:1559px;top:300px;width:2px;height:180px;background:#20732f"></div>
<div class="a" style="left:1559px;top:300px;width:2px;height:10px;background:#217346"></div>
<!-- scrollbar thumbs / arrows -->
<div class="a" style="left:1540px;top:320px;width:11px;height:502px;border-radius:6px;background:#6e6e00"></div>
<div class="a" style="left:986px;top:880px;width:498px;height:12px;border-radius:6px;background:#6e6e00"></div>
<svg style="left:0;top:0" width="1568" height="300"><path d="M1547.500 417L1549 425L1549.800 440L1549.300 453L1548.300 452L1548.500 436Z" fill="#8a8a8a" transform="translate(0 0)"/></svg>
<svg style="left:0;top:0" width="1568" height="940" fill="#6e6e00" stroke="#6e6e00" stroke-width="1.5" stroke-linejoin="round">
<path d="M1545.500 304.500L1551.500 311.500H1539.500Z"/>
<path d="M1545.500 859.500L1551.500 852.500H1539.500Z"/>
<path d="M971 886L977.500 881.500V890.500Z"/>
<path d="M1526 886L1518.500 881V891Z"/>
</svg>

<!-- tab row + formula bar + status bar icons (absolute page coords) -->
<svg style="left:0;top:0" width="1568" height="940" fill="none" stroke="#444" stroke-width="1.35" stroke-linejoin="round">
<!-- comments bubble -->
<path d="M1271.500 83.500H1284.500V92.300H1276.300L1273.300 95.300V92.300H1271.500Z" stroke-width="1.300"/>
<!-- share -->
<g stroke="#fff" stroke-width="1.400">
<path d="M1418.500 89.500H1415.800V97H1428.800V94"/>
<path d="M1426 82.800L1430.600 87.200L1426 91.600V89C1422.500 88.800 1420.500 90.200 1419.300 93C1419.500 88.500 1421.800 85.800 1426 85.400Z"/>
</g>
<!-- smiley -->
<circle cx="1526.800" cy="89.300" r="10.200" stroke-width="1.400"/>
<circle cx="1523.300" cy="86.200" r="1.300" fill="#444" stroke="none"/>
<circle cx="1530.300" cy="86.200" r="1.300" fill="#444" stroke="none"/>
<path d="M1521.500 92.300C1523 94.600 1525 95.500 1526.800 95.500C1528.600 95.500 1530.600 94.600 1532.100 92.300" stroke-width="1.400"/>
<!-- name box chevron -->
<path d="M192.300 269.800L198.800 276.300L205.300 269.800" stroke-width="1.500"/>
<!-- dots -->
<g fill="#777" stroke="none"><rect x="224.800" y="266.500" width="2.800" height="2.400"/><rect x="224.800" y="271.900" width="2.800" height="2.400"/><rect x="224.800" y="277.300" width="2.800" height="2.400"/></g>
<!-- cancel / enter -->
<path d="M249.800 265.800L264.900 280.900M264.900 265.800L249.800 280.900" stroke="#b0b0b0" stroke-width="1.300"/>
<path d="M279.600 272.800L286.700 279.900L300.400 266" stroke="#b0b0b0" stroke-width="1.300"/>
<!-- fx -->
<g stroke="#2b2b2b" stroke-linecap="round" fill="none">
<path d="M328 264.300C327.500 262.600 325.500 262.100 324.100 263.300C322.600 264.600 322 267 321.200 270.500L319.600 277.500C318.800 280.800 317.400 283 315.400 282.800C314.400 282.700 313.700 282.200 313.500 281.600" stroke-width="1.600"/>
<path d="M318 268.400H324.800" stroke-width="1.200"/>
<path d="M323 273C324.200 271.600 325.800 271.600 326.400 273.200L328.200 278.600C328.800 280.400 330.400 280.300 331.600 278.400" stroke-width="1.600"/>
<path d="M332.200 272.700C331.200 271.700 329.800 272 328.800 273.600L325.800 278.400C324.800 280.100 323.400 280.300 322.700 279.400" stroke-width="1.300"/>
<circle cx="327.700" cy="264.600" r="0.900" fill="#2b2b2b" stroke="none"/><circle cx="313.900" cy="281.500" r="0.900" fill="#2b2b2b" stroke="none"/>
</g>
<!-- status: macro record -->
<g stroke="#444" stroke-width="1.300">
<path d="M463 931.500H456V916H474.500V921M456 919.500H474.500" />
<circle cx="468.700" cy="927" r="5"/>
<path d="M458 923.300H461.500M458 926.300H460.500" stroke-width="1.100"/>
<circle cx="468.700" cy="927" r="2.300" fill="#444" stroke="none"/>
</g>
<!-- status: accessibility -->
<g stroke="#444" stroke-width="1.300" stroke-linecap="round">
<circle cx="506.400" cy="916.200" r="1.900"/>
<path d="M498.700 918.300C499.500 920.300 501.500 921.300 503.300 921.500H509.600C511.500 921.300 513.300 920.300 514 918.300M503.300 921.500C504.500 924 502.500 926.500 502.800 929C503 931 502 932 500.800 931.800M509.600 921.500V924.300"/>
<path d="M506.300 928.300L509.700 931.700L517 924.400" stroke-width="1.400"/>
</g>
<!-- status: display settings -->
<g stroke="#444" stroke-width="1.300">
<path d="M998.500 926.700H992.200V916.300H1010.500V919.500"/>
<circle cx="1005.300" cy="926.700" r="2.900" stroke-width="2"/>
<path d="M1005.300 921.700V923.200M1005.300 930.200V931.700M1000.300 926.700H1001.800M1008.800 926.700H1010.300M1001.800 923.200L1002.900 924.300M1007.700 929.100L1008.800 930.200M1001.800 930.200L1002.900 929.100M1007.700 924.300L1008.800 923.200" stroke-width="2.200"/>
</g>
<!-- view buttons -->
<g stroke="#333" stroke-width="1.700">
<rect x="1158.500" y="915" width="16.300" height="16" fill="#f4f4f4"/>
<path d="M1163.900 915V931M1169.500 915V931M1158.500 920.300H1174.800M1158.500 925.700H1174.800"/>
<rect x="1213" y="915" width="17.500" height="16" rx="1" fill="#fff"/>
<rect x="1217" y="918" width="9.400" height="10" stroke-width="1.500"/>
<path d="M1219.200 920.500H1224.200M1219.200 923H1224.200M1219.200 925.500H1224.200" stroke-width="1.100"/>
<rect x="1267.500" y="915" width="17.500" height="16" rx="1" fill="#fff"/>
<path d="M1272.800 915V924.500M1278.400 915V924.500H1267.500" stroke-width="1.600"/>
</g>
</svg>

<!-- texts -->
<div class="t" style="left:67.20px;top:28.00px;font-size:16px;color:#ffffff;letter-spacing:-0.098px;">AutoSave</div>
<div class="t" style="left:174.40px;top:27.00px;font-size:15px;color:#ffffff;transform:scaleX(0.9385);transform-origin:0 0;">Off</div>
<div class="t" style="left:839.60px;top:28.00px;font-size:16px;color:#ffffff;letter-spacing:-0.192px;">Book3</div>
<div class="t" style="left:895.50px;top:28.00px;font-size:16px;color:#ffffff;">-</div>
<div class="t" style="left:910.12px;top:28.00px;font-size:16px;color:#ffffff;transform:scaleX(0.8784);transform-origin:0 0;">Excel</div>
<div class="t" style="left:1059.60px;top:27.00px;font-size:16px;color:#ffffff;letter-spacing:-0.054px;">Henrik Schiffner</div>
<div class="t" style="left:29.00px;top:83.00px;font-size:17.5px;color:#424242;letter-spacing:0.178px;">File</div>
<div class="t" style="left:92.30px;top:83.00px;font-size:17.5px;color:#262626;letter-spacing:1.317px;-webkit-text-stroke:.5px;">Home</div>
<div class="t" style="left:169.00px;top:83.00px;font-size:17.5px;color:#424242;letter-spacing:-0.081px;">Insert</div>
<div class="t" style="left:239.50px;top:83.00px;font-size:17.5px;color:#424242;letter-spacing:0.101px;">Draw</div>
<div class="t" style="left:308.00px;top:83.00px;font-size:17.5px;color:#424242;letter-spacing:-0.241px;">Page Layout</div>
<div class="t" style="left:432.20px;top:83.00px;font-size:17.5px;color:#424242;letter-spacing:-0.054px;">Formulas</div>
<div class="t" style="left:531.00px;top:83.00px;font-size:17.5px;color:#424242;letter-spacing:-0.078px;">Data</div>
<div class="t" style="left:593.56px;top:83.00px;font-size:17.5px;color:#424242;transform:scaleX(0.9429);transform-origin:0 0;">Review</div>
<div class="t" style="left:675.00px;top:83.00px;font-size:17.5px;color:#424242;letter-spacing:0.008px;">View</div>
<div class="t" style="left:739.00px;top:83.00px;font-size:17.5px;color:#424242;letter-spacing:0.580px;">Help</div>
<div class="t" style="left:805.04px;top:83.00px;font-size:17.5px;color:#424242;transform:scaleX(0.9614);transform-origin:0 0;">Professor Excel</div>
<div class="t" style="left:1292.20px;top:83.00px;font-size:17.5px;color:#262626;letter-spacing:0.450px;-webkit-text-stroke:.5px;">Comments</div>
<div class="t" style="left:1438.10px;top:83.00px;font-size:17.5px;color:#ffffff;transform:scaleX(0.9768);transform-origin:0 0;-webkit-text-stroke:.5px;">Share</div>
<div class="t" style="left:37.30px;top:228.00px;font-size:14px;color:#4a4a4a;letter-spacing:0.606px;">Undo</div>
<div class="t" style="left:118.70px;top:227.00px;font-size:14px;color:#4a4a4a;letter-spacing:0.370px;">Clipboard</div>
<div class="t" style="left:312.40px;top:227.00px;font-size:14px;color:#4a4a4a;letter-spacing:0.159px;">Font</div>
<div class="t" style="left:494.70px;top:227.00px;font-size:14px;color:#4a4a4a;letter-spacing:0.367px;">Alignment</div>
<div class="t" style="left:665.00px;top:227.00px;font-size:14px;color:#4a4a4a;letter-spacing:0.374px;">Number</div>
<div class="t" style="left:882.00px;top:228.00px;font-size:14px;color:#4a4a4a;transform:scaleX(0.9102);transform-origin:0 0;">Styles</div>
<div class="t" style="left:1075.00px;top:228.00px;font-size:14px;color:#4a4a4a;transform:scaleX(0.9448);transform-origin:0 0;">Cells</div>
<div class="t" style="left:1245.00px;top:228.00px;font-size:14px;color:#4a4a4a;letter-spacing:-0.219px;">Analysis</div>
<div class="t" style="left:1323.00px;top:228.00px;font-size:14px;color:#4a4a4a;letter-spacing:0.078px;">Magic Merge Manager</div>
<div class="t" style="left:114.91px;top:174.00px;font-size:16px;color:#262626;transform:scaleX(0.8872);transform-origin:0 0;">Paste</div>
<div class="t" style="left:243.00px;top:128.00px;font-size:16px;color:#262626;letter-spacing:-0.063px;">Arial</div>
<div class="t" style="left:383.05px;top:128.00px;font-size:16px;color:#262626;transform:scaleX(0.9468);transform-origin:0 0;">10</div>
<div class="t" style="left:645.00px;top:128.00px;font-size:16px;color:#262626;transform:scaleX(0.9349);transform-origin:0 0;">General</div>
<div class="t" style="left:819.80px;top:127.00px;font-size:16px;color:#262626;letter-spacing:0.273px;">Conditional Formatting</div>
<div class="t" style="left:818.80px;top:163.00px;font-size:16px;color:#262626;letter-spacing:-0.115px;">Format as Table</div>
<div class="t" style="left:819.80px;top:198.00px;font-size:16px;color:#262626;transform:scaleX(0.9222);transform-origin:0 0;">Cell Styles</div>
<div class="t" style="left:1067.00px;top:127.00px;font-size:16px;color:#262626;letter-spacing:0.026px;">Insert</div>
<div class="t" style="left:1067.00px;top:163.00px;font-size:16px;color:#262626;letter-spacing:-0.130px;">Delete</div>
<div class="t" style="left:1067.00px;top:198.00px;font-size:16px;color:#262626;letter-spacing:0.155px;">Format</div>
<div class="t" style="left:1168.70px;top:169.00px;font-size:16px;color:#262626;letter-spacing:0.046px;">Editing</div>
<div class="t" style="left:1243.50px;top:172.00px;font-size:16px;color:#262626;transform:scaleX(0.9698);transform-origin:0 0;">Analyze</div>
<div class="t" style="left:1254.85px;top:194.00px;font-size:16px;color:#262626;transform:scaleX(0.9545);transform-origin:0 0;">Data</div>
<div class="t" style="left:1328.80px;top:172.00px;font-size:16px;color:#262626;letter-spacing:0.137px;">Merge</div>
<div class="t" style="left:1337.02px;top:194.00px;font-size:16px;color:#262626;transform:scaleX(0.8816);transform-origin:0 0;">Files</div>
<div class="t" style="left:1386.50px;top:172.00px;font-size:16px;color:#262626;letter-spacing:0.431px;">About and</div>
<div class="t" style="left:1396.40px;top:194.00px;font-size:16px;color:#262626;letter-spacing:-0.173px;">Settings</div>
<div class="t" style="left:249.95px;top:160.00px;font-size:18.5px;color:#333;font-weight:700;">B</div>
<div class="t" style="left:288.45px;top:159.00px;font-size:19.5px;color:#262626;font-style:italic;font-family:'Liberation Serif',serif;">I</div>
<div class="t" style="left:320.10px;top:160.00px;font-size:17.5px;color:#262626;">U</div>
<div class="t" style="left:574.20px;top:122.00px;font-size:14.5px;color:#444;letter-spacing:0.036px;">ab</div>
<div class="t" style="left:574.40px;top:132.00px;font-size:14.5px;color:#444;">c</div>
<div class="t" style="left:19.00px;top:265.00px;font-size:16.5px;color:#262626;letter-spacing:-0.005px;">A1</div>
<div class="t" style="left:74.80px;top:300.00px;font-size:18px;color:#1e6e43;">A</div>
<div class="t" style="left:161.30px;top:300.00px;font-size:18px;color:#000;">B</div>
<div class="t" style="left:248.30px;top:300.00px;font-size:18px;color:#000;">C</div>
<div class="t" style="left:334.80px;top:300.00px;font-size:18px;color:#000;">D</div>
<div class="t" style="left:422.30px;top:300.00px;font-size:18px;color:#000;">E</div>
<div class="t" style="left:509.80px;top:300.00px;font-size:18px;color:#000;">F</div>
<div class="t" style="left:596.30px;top:300.00px;font-size:18px;color:#000;">G</div>
<div class="t" style="left:683.30px;top:300.00px;font-size:18px;color:#000;">H</div>
<div class="t" style="left:774.30px;top:300.00px;font-size:18px;color:#000;">I</div>
<div class="t" style="left:859.80px;top:300.00px;font-size:18px;color:#000;">J</div>
<div class="t" style="left:944.30px;top:300.00px;font-size:18px;color:#000;">K</div>
<div class="t" style="left:1032.30px;top:300.00px;font-size:18px;color:#000;">L</div>
<div class="t" style="left:1117.30px;top:300.00px;font-size:18px;color:#000;">M</div>
<div class="t" style="left:1205.30px;top:300.00px;font-size:18px;color:#000;">N</div>
<div class="t" style="left:1291.80px;top:300.00px;font-size:18px;color:#000;">O</div>
<div class="t" style="left:1379.30px;top:300.00px;font-size:18px;color:#000;">P</div>
<div class="t" style="left:1465.80px;top:300.00px;font-size:18px;color:#000;">Q</div>
<div class="t" style="left:14.25px;top:323.00px;font-size:18px;color:#1e6e43;">1</div>
<div class="t" style="left:14.75px;top:346.00px;font-size:18px;color:#000;">2</div>
<div class="t" style="left:14.75px;top:368.00px;font-size:18px;color:#000;">3</div>
<div class="t" style="left:14.75px;top:391.00px;font-size:18px;color:#000;">4</div>
<div class="t" style="left:14.75px;top:414.00px;font-size:18px;color:#000;">5</div>
<div class="t" style="left:14.75px;top:436.00px;font-size:18px;color:#000;">6</div>
<div class="t" style="left:14.75px;top:459.00px;font-size:18px;color:#000;">7</div>
<div class="t" style="left:14.75px;top:482.00px;font-size:18px;color:#000;">8</div>
<div class="t" style="left:14.75px;top:504.00px;font-size:18px;color:#000;">9</div>
<div class="t" style="left:9.24px;top:527.00px;font-size:18px;color:#000;">10</div>
<div class="t" style="left:9.91px;top:550.00px;font-size:18px;color:#000;">11</div>
<div class="t" style="left:9.24px;top:572.00px;font-size:18px;color:#000;">12</div>
<div class="t" style="left:9.24px;top:595.00px;font-size:18px;color:#000;">13</div>
<div class="t" style="left:9.24px;top:618.00px;font-size:18px;color:#000;">14</div>
<div class="t" style="left:9.24px;top:640.00px;font-size:18px;color:#000;">15</div>
<div class="t" style="left:9.24px;top:663.00px;font-size:18px;color:#000;">16</div>
<div class="t" style="left:9.24px;top:686.00px;font-size:18px;color:#000;">17</div>
<div class="t" style="left:9.24px;top:708.00px;font-size:18px;color:#000;">18</div>
<div class="t" style="left:9.24px;top:731.00px;font-size:18px;color:#000;">19</div>
<div class="t" style="left:9.74px;top:754.00px;font-size:18px;color:#000;">20</div>
<div class="t" style="left:9.74px;top:776.00px;font-size:18px;color:#000;">21</div>
<div class="t" style="left:9.74px;top:799.00px;font-size:18px;color:#000;">22</div>
<div class="t" style="left:9.74px;top:822.00px;font-size:18px;color:#000;">23</div>
<div class="t" style="left:9.74px;top:844.00px;font-size:18px;color:#000;">24</div>
<div class="t" style="left:164.10px;top:875.00px;font-size:19px;color:#262626;transform:scaleX(0.9120);transform-origin:0 0;-webkit-text-stroke:.5px;">Sheet1</div>
<div class="t" style="left:11.04px;top:917.00px;font-size:14px;color:#3b3b3b;transform:scaleX(0.9577);transform-origin:0 0;">Ready</div>
<div class="t" style="left:70.00px;top:917.00px;font-size:14px;color:#3b3b3b;letter-spacing:-0.178px;">Circular References</div>
<div class="t" style="left:212.00px;top:917.00px;font-size:14px;color:#3b3b3b;letter-spacing:-0.111px;">Sheet 1 of 1</div>
<div class="t" style="left:306.50px;top:917.00px;font-size:14px;color:#3b3b3b;letter-spacing:-0.009px;">Workbook Statistics</div>
<div class="t" style="left:521.00px;top:917.00px;font-size:14px;color:#3b3b3b;letter-spacing:-0.021px;">Accessibility: Good to go</div>
<div class="t" style="left:1014.50px;top:917.00px;font-size:14px;color:#3b3b3b;letter-spacing:0.008px;">Display Settings</div>
<div class="t" style="left:1498.00px;top:917.00px;font-size:14px;color:#3b3b3b;letter-spacing:-0.119px;">100%</div>
</div>
</body>
</html>
